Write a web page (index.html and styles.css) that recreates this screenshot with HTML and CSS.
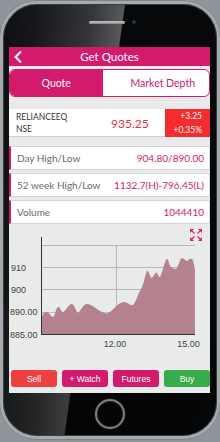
FILE: index.html
```html
<!DOCTYPE html>
<html>
<head>
<meta charset="utf-8">
<link rel="stylesheet" href="styles.css">
</head>
<body>
<div class="phone">
  <div class="bezel-top">
    <span class="speaker"></span>
    <span class="camera"></span>
  </div>
  <div class="screen">
    <div class="header">
      <svg class="back" width="12" height="14" viewBox="0 0 12 14"><polyline points="9,1.5 3.5,7 9,12.5" fill="none" stroke="#fff" stroke-width="2"/></svg>
      <div class="title">Get Quotes</div>
      <div></div>
    </div>
    <div class="tabs">
      <div class="tab active">Quote</div>
      <div class="tab depth">Market Depth</div>
    </div>
    <div class="stock">
      <div class="name">RELIANCEEQ<br>NSE</div>
      <div class="price">935.25</div>
      <div class="change">+3.25<br>+0.35%</div>
    </div>
    <div class="stat"><span class="label">Day High/Low</span><span class="value">904.80/890.00</span></div>
    <div class="stat"><span class="label">52 week High/Low</span><span class="value">1132.7(H)-796.45(L)</span></div>
    <div class="stat last"><span class="label">Volume</span><span class="value">1044410</span></div>
    <svg class="chart" width="201" height="140" viewBox="9 225 201 140">
      <g fill="#e0206f" stroke="#e0206f" stroke-width="1.3">
        <path d="M190,229 L194,229 L190,233 Z" stroke="none"/>
        <line x1="191" y1="230" x2="194.5" y2="233.5"/>
        <path d="M202,229 L198,229 L202,233 Z" stroke="none"/>
        <line x1="201" y1="230" x2="197.5" y2="233.5"/>
        <path d="M190,241 L194,241 L190,237 Z" stroke="none"/>
        <line x1="191" y1="240" x2="194.5" y2="236.5"/>
        <path d="M202,241 L198,241 L202,237 Z" stroke="none"/>
        <line x1="201" y1="240" x2="197.5" y2="236.5"/>
      </g>
      <g stroke="#a9a9a9" stroke-width="0.8">
        <line x1="41" y1="245.5" x2="195" y2="245.5"/>
        <line x1="41" y1="267.5" x2="195" y2="267.5"/>
        <line x1="41" y1="289.5" x2="195" y2="289.5"/>
        <line x1="41" y1="312.5" x2="195" y2="312.5"/>
        <line x1="116.5" y1="245" x2="116.5" y2="334"/>
      </g>
      <path fill="#b4838f" d="M41.5,334 L41.5,318 C43,313 45,311 47,312 C50,313 51,317 53,317 C55,316 56,308 58,307 C60,306 61,312 63,312 C66,311 69,303 72,304 C75,305 76,312 78,313 C80,312 83,304 87,304 C92,304 97,310 102,312 C104,313 106,314 108,313 C113,311 118,302 124,302 C128,302 130,306 133,305 C136,302 138,294 141,289 C144,284 145,274 147,271 C149,270 150,278 152,278 C154,276 155,272 157,273 C158,274 158,277 160,277 C162,275 165,259 167,259 C169,259 169,266 171,267 C173,268 174,269 176,269 C178,268 180,258 182,258 C184,258 185,261 187,261 C189,260 190,258 192,259 C193,259 193,262 194,264 L195,271 L195,334 Z"/>
      <g stroke="#333" stroke-width="1">
        <line x1="41.5" y1="237" x2="41.5" y2="334.5"/>
        <line x1="41" y1="334.5" x2="195" y2="334.5"/>
      </g>
      <g class="axis-label" fill="#444">
        <text x="11" y="270.5">910</text>
        <text x="11" y="292.5">900</text>
        <text x="10" y="315">890.00</text>
        <text x="10" y="338">885.00</text>
        <text x="115" y="346.5" text-anchor="middle">12.00</text>
        <text x="188.5" y="346.5" text-anchor="middle">15.00</text>
      </g>
    </svg>
    <div class="actions">
      <div class="btn sell">Sell</div>
      <div class="btn watch">+ Watch</div>
      <div class="btn futures">Futures</div>
      <div class="btn buy">Buy</div>
    </div>
  </div>
  <div class="bezel-bottom">
    <span class="home"></span>
  </div>
</div>
</body>
</html>
```
FILE: styles.css
```css
html, body {
  margin: 0;
  padding: 0;
}
body {
  width: 220px;
  height: 442px;
  overflow: hidden;
  background: #8e959b;
  font-family: Lato, "Liberation Sans", sans-serif;
}
.phone {
  box-sizing: border-box;
  width: 220px;
  height: 438px;
  margin-top: 1px;
  border: 3px solid #a6aaad;
  border-radius: 37px;
  box-shadow: inset 0 0 0 1px #3a3d40, 0 0 0 0.5px #6d7378;
  background:
    linear-gradient(180deg, rgba(0,0,0,0) 0%, rgba(0,0,0,0.35) 100%),
    linear-gradient(98deg, #0c0e10 0%, #15171a 12%, #35373a 33%, #585a5c 44.2%, #060809 44.7%, #07090a 100%);
  overflow: hidden;
}
.bezel-top {
  height: 43px;
  box-sizing: border-box;
  display: flex;
  align-items: center;
  padding-left: 86px;
  padding-bottom: 7px;
  gap: 7px;
}
.speaker {
  width: 36px;
  height: 3px;
  border-radius: 2px;
  background: linear-gradient(180deg, #c9c9c9, #8a8a8a);
}
.camera {
  width: 4px;
  height: 4px;
  border-radius: 50%;
  background: #24324f;
}
.screen {
  width: 201px;
  height: 346px;
  margin-left: 6px;
  background: #e9ebea;
  display: flex;
  flex-direction: column;
}
.header {
  height: 19px;
  background: #d41a6d;
  display: grid;
  grid-template-columns: 20px 1fr 20px;
  align-items: center;
}
.back {
  margin-left: 3px;
}
.title {
  text-align: center;
  color: #fff;
  font-size: 11.5px;
}
.tabs {
  margin-top: 3px;
  height: 28px;
  box-sizing: border-box;
  border: 1.5px solid #d41a6d;
  border-radius: 6px;
  display: flex;
  overflow: hidden;
  background: #fff;
}
.tab {
  flex: 1;
  display: flex;
  align-items: center;
  justify-content: center;
  font-size: 10.5px;
}
.tab.active {
  background: #d41a6d;
  color: #fff;
}
.tab.depth {
  color: #d41a6d;
  padding-left: 14px;
}
.stock {
  margin-top: 12px;
  height: 28px;
  box-sizing: border-box;
  background: #fff;
  border-bottom: 1px solid #cfcfcf;
  display: grid;
  grid-template-columns: 96px 60px 45px;
  margin-bottom: 9px;
}
.name {
  padding-left: 7px;
  font-size: 8.5px;
  line-height: 12px;
  color: #333;
  padding-top: 2px;
}
.price {
  padding-left: 6px;
  font-size: 12px;
  color: #e8303a;
  display: flex;
  align-items: center;
}
.change {
  background: #f42b2f;
  color: #fff;
  font-size: 8.5px;
  line-height: 14px;
  text-align: right;
  padding-right: 8px;
}
.stat {
  height: 24px;
  box-sizing: border-box;
  background: #fff;
  border: 1px solid #d6d6d6;
  border-left: 2px solid #d41a6d;
  margin-bottom: 3px;
  display: flex;
  align-items: center;
  justify-content: space-between;
  padding: 0 5px 0 6px;
}
.stat.last {
  margin-bottom: 1px;
}
.label {
  font-size: 10px;
  color: #6a6a6a;
}
.value {
  font-size: 10px;
  color: #d41a6d;
}
.chart {
  display: block;
}
.axis-label text {
  font-family: "Liberation Sans", Arial, sans-serif;
  font-size: 9px;
}
.actions {
  margin-top: 5px;
  display: flex;
  gap: 5px;
  padding: 0 0 0 2px;
}
.btn {
  width: 46px;
  height: 17px;
  border-radius: 3px;
  color: #fff;
  font-family: "Liberation Sans", Arial, sans-serif;
  font-size: 8.5px;
  display: flex;
  align-items: center;
  justify-content: center;
}
.sell { background: #ef4041; }
.watch { background: #d41a6d; }
.futures { background: #d41a6d; }
.buy { background: #38ab4a; }
.bezel-bottom {
  display: flex;
  justify-content: center;
  padding-top: 6px;
}
.home {
  width: 30px;
  height: 30px;
  box-sizing: border-box;
  border-radius: 50%;
  border: 2px solid #7b7d7f;
  box-shadow: inset 0 0 0 1px #222, 0 0 0 0.5px #333;
}
```
